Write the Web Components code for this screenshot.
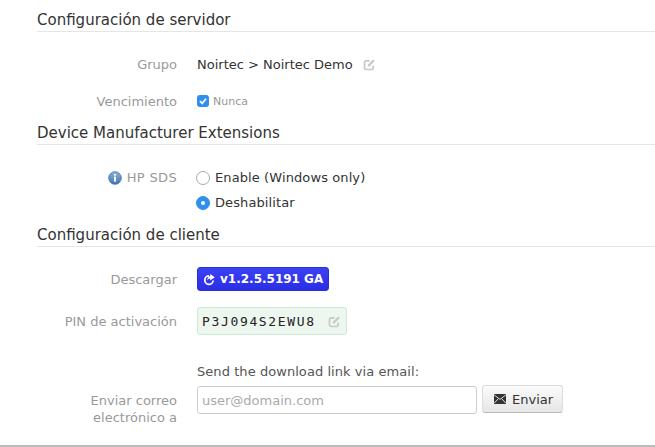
<!DOCTYPE html>
<html>
<head>
<meta charset="utf-8">
<style>
  html, body { margin: 0; padding: 0; background: #fff; }
  body { font-family: "DejaVu Sans", sans-serif; font-size: 13px; color: #333; height: 447px; overflow: hidden; }
  settings-page { display: block; }
</style>
</head>
<body>
<settings-page>
  <form-section heading="Configuración de servidor" style="--head-top:10px;--head-bottom:1px;--body-top:14px">
    <form-row label="Grupo" height="36">
      <span>Noirtec &gt; Noirtec Demo</span>
      <edit-icon style="margin-left:10px"></edit-icon>
    </form-row>
    <form-row label="Vencimiento" height="38">
      <check-box>Nunca</check-box>
    </form-row>
  </form-section>
  <form-section heading="Device Manufacturer Extensions" style="--body-top:20px;--body-bottom:7px">
    <form-row label="HP SDS" height="25" info>
      <radio-option>Enable (Windows only)</radio-option>
    </form-row>
    <form-row height="25">
      <radio-option checked>Deshabilitar</radio-option>
    </form-row>
  </form-section>
  <form-section heading="Configuración de cliente" style="--body-top:15px">
    <form-row label="Descargar" height="34">
      <download-button>v1.2.5.5191 GA</download-button>
    </form-row>
    <form-row label="PIN de activación" height="50">
      <pin-box>P3J094S2EWU8</pin-box>
    </form-row>
    <email-row label="Enviar correo electrónico a"></email-row>
  </form-section>
</settings-page>
<page-rule></page-rule>

<script>
const EDIT_SVG = `<svg width="13" height="13" viewBox="0 0 13 13" fill="none">
  <path d="M10.2 7.5V9.8A1.7 1.7 0 0 1 8.5 11.5H3.2A1.7 1.7 0 0 1 1.5 9.8V4.5A1.7 1.7 0 0 1 3.2 2.8H6.5" stroke="currentColor" stroke-width="1.7"/>
  <path d="M4.8 6.8L10.2 1.4 11.8 3 6.4 8.4H4.8Z" fill="currentColor"/>
</svg>`;

class EditIcon extends HTMLElement {
  connectedCallback() {
    this.attachShadow({ mode: 'open' });
    this.shadowRoot.innerHTML = `
      <style>
        :host { display: inline-flex; color: #c8c8c8; }
      </style>
      ${EDIT_SVG}`;
  }
}

class FormSection extends HTMLElement {
  connectedCallback() {
    this.attachShadow({ mode: 'open' });
    this.shadowRoot.innerHTML = `
      <style>
        :host { display: block; }
        h2 {
          margin: 0 0 0 37px;
          font-size: 15px;
          font-weight: 400;
          line-height: 20px;
          color: #333;
          padding: var(--head-top, 3px) 0 var(--head-bottom, 1px);
          border-bottom: 1px solid #e5e5e5;
        }
        .body { padding: var(--body-top, 16px) 0 var(--body-bottom, 0); }
      </style>
      <h2>${this.getAttribute('heading')}</h2>
      <div class="body"><slot></slot></div>`;
  }
}

class FormRow extends HTMLElement {
  connectedCallback() {
    this.attachShadow({ mode: 'open' });
    const label = this.getAttribute('label') || '';
    const hasInfo = this.hasAttribute('info');
    const info = hasInfo ? `
      <svg class="info" width="14" height="14" viewBox="0 0 14 14">
        <defs><linearGradient id="g" x1="0" y1="0" x2="0" y2="1"><stop offset="0" stop-color="#8fb2d6"/><stop offset="1" stop-color="#3f76b0"/></linearGradient></defs>
        <circle cx="7" cy="7" r="6.3" fill="url(#g)" stroke="#3d6fa6" stroke-width="0.8"/>
        <circle cx="7" cy="3.8" r="1.1" fill="#fff"/>
        <rect x="6" y="5.6" width="2" height="5" fill="#fff"/>
      </svg>` : '';
    this.shadowRoot.innerHTML = `
      <style>
        :host { display: flex; align-items: center; height: ${this.getAttribute('height')}px; }
        .label {
          width: 177px;
          flex: none;
          display: flex;
          justify-content: flex-end;
          align-items: center;
          gap: 5px;
          color: #999;
          letter-spacing: ${hasInfo ? '.35px' : '0'};
        }
        .info { flex: none; }
        .value { margin-left: 20px; display: flex; align-items: center; color: #333; }
      </style>
      <div class="label">${info}<span>${label}</span></div>
      <div class="value"><slot></slot></div>`;
  }
}

class CheckBox extends HTMLElement {
  connectedCallback() {
    this.attachShadow({ mode: 'open' });
    this.shadowRoot.innerHTML = `
      <style>
        :host { display: inline-flex; align-items: center; gap: 4px; color: #999; font-size: 11px; }
        .box { width: 12px; height: 12px; border-radius: 3px; background: #2f8fee; display: flex; }
      </style>
      <span class="box"><svg width="12" height="12" viewBox="0 0 12 12" fill="none"><path d="M3 6.2L5.2 8.4 9 3.8" stroke="#fff" stroke-width="1.7"/></svg></span>
      <slot></slot>`;
  }
}

class RadioOption extends HTMLElement {
  connectedCallback() {
    this.attachShadow({ mode: 'open' });
    const on = this.hasAttribute('checked');
    this.shadowRoot.innerHTML = `
      <style>
        :host { display: inline-flex; align-items: center; gap: 5px; margin-left: -1px; color: #333; letter-spacing: .1px; }
        .dot {
          width: 14px; height: 14px; box-sizing: border-box; border-radius: 50%;
          display: flex; align-items: center; justify-content: center;
          border: 1px solid ${on ? '#2f8fee' : '#aaa'};
          background: ${on ? '#2f8fee' : '#fff'};
        }
        .dot i { width: 4px; height: 4px; border-radius: 50%; background: #fff; display: ${on ? 'block' : 'none'}; }
      </style>
      <span class="dot"><i></i></span>
      <slot></slot>`;
  }
}

class DownloadButton extends HTMLElement {
  connectedCallback() {
    this.attachShadow({ mode: 'open' });
    this.shadowRoot.innerHTML = `
      <style>
        :host {
          display: inline-flex; align-items: center; gap: 5px;
          height: 24px; box-sizing: border-box; padding: 0 5px 0 5px;
          background: linear-gradient(#3b41f4, #2a2ee6);
          border: 1px solid #2a30d0; border-radius: 3px;
          color: #fff; font-size: 12px; font-weight: 700;
        }
      </style>
      <svg width="12" height="13" viewBox="0 0 12 13" fill="none">
        <path d="M6 2.9A4.2 4.2 0 1 0 10.2 7.5" stroke="#fff" stroke-width="1.7"/>
        <path d="M7.2 1L11.8 4.2 7.2 7.4V5.6C5.8 5.6 4.8 6.3 4.2 7.8 4.2 5.2 5.4 3.4 7.2 3Z" fill="#fff"/>
      </svg>
      <slot></slot>`;
  }
}

class PinBox extends HTMLElement {
  connectedCallback() {
    this.attachShadow({ mode: 'open' });
    this.shadowRoot.innerHTML = `
      <style>
        :host {
          display: inline-flex; align-items: center; justify-content: space-between;
          width: 150px; height: 28px; box-sizing: border-box; padding: 0 5px 0 4px;
          background: #eef7ef; border: 1px solid #c9ecd0; border-radius: 3px;
          font-family: "DejaVu Sans Mono", monospace; font-size: 13px; color: #222; letter-spacing: 1.65px;
        }
      </style>
      <span><slot></slot></span>
      <edit-icon></edit-icon>`;
  }
}

class EmailRow extends HTMLElement {
  connectedCallback() {
    this.attachShadow({ mode: 'open' });
    this.shadowRoot.innerHTML = `
      <style>
        :host { display: flex; }
        .label {
          width: 177px; flex: none; box-sizing: border-box;
          padding: 46px 0 0 77px;
          text-align: right; color: #999; line-height: 17px;
        }
        .main { margin-left: 20px; padding-top: 17px; }
        .hint { color: #555; line-height: 18px; margin-bottom: 5px; letter-spacing: .06px; }
        .line { display: flex; align-items: flex-start; gap: 5px; }
        input {
          width: 280px; height: 28px; box-sizing: border-box; padding: 0 4px; margin: 0;
          border: 1px solid #ccc; border-radius: 3px; outline: 0;
          font: 13px "DejaVu Sans", sans-serif; color: #333;
        }
        input::placeholder { color: #aaa; opacity: 1; }
        button {
          display: inline-flex; align-items: center; gap: 6px;
          height: 28px; width: 81px; box-sizing: border-box; padding: 0 0 0 11px; margin: -1px 0 0;
          border: 1px solid #ddd; border-bottom-color: #bbb; border-radius: 3px;
          background: linear-gradient(#fbfbfb, #e6e6e6);
          font: 13px "DejaVu Sans", sans-serif; color: #333;
        }
      </style>
      <div class="label">${this.getAttribute('label')}</div>
      <div class="main">
        <div class="hint">Send the download link via email:</div>
        <div class="line">
          <input type="text" placeholder="user@domain.com">
          <button><svg width="12" height="10" viewBox="0 0 12 10"><rect width="12" height="10" fill="#333"/><path d="M0 .8L6 5.4 12 .8M0 9.4L4.4 4.6M12 9.4L7.6 4.6" fill="none" stroke="#eee" stroke-width=".9"/></svg>Enviar</button>
        </div>
      </div>`;
  }
}

class PageRule extends HTMLElement {
  connectedCallback() {
    this.attachShadow({ mode: 'open' });
    this.shadowRoot.innerHTML = `
      <style>
        :host { display: block; height: 2px; margin-top: 19px; background: #bbb; }
      </style>`;
  }
}

customElements.define('edit-icon', EditIcon);
customElements.define('form-section', FormSection);
customElements.define('form-row', FormRow);
customElements.define('check-box', CheckBox);
customElements.define('radio-option', RadioOption);
customElements.define('download-button', DownloadButton);
customElements.define('pin-box', PinBox);
customElements.define('email-row', EmailRow);
customElements.define('page-rule', PageRule);
</script>
</body>
</html>
